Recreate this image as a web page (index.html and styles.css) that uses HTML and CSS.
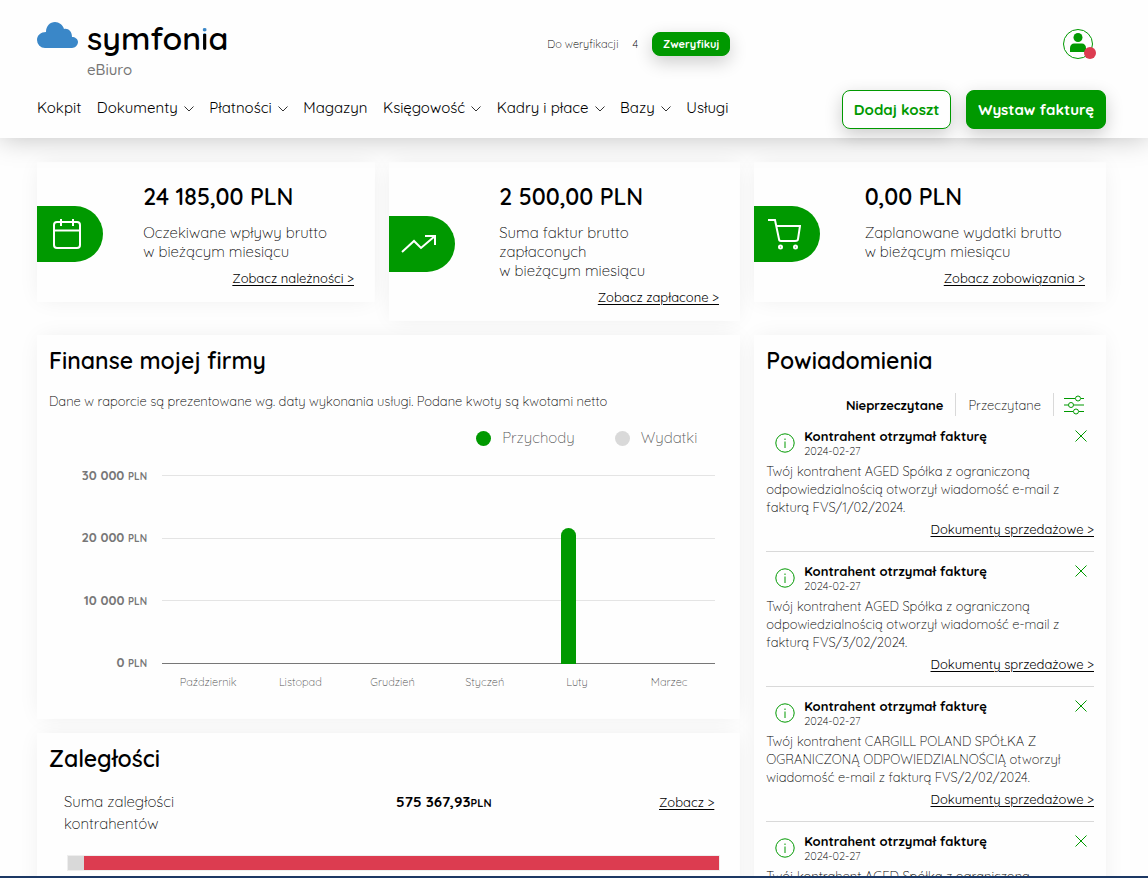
FILE: index.html
```
<!DOCTYPE html>
<html lang="pl">
<head>
    <meta charset="utf-8">
    <meta name="viewport" content="width=device-width, initial-scale=1.0">
    <title>Symfonia eBiuro</title>
    <link rel="stylesheet" href="styles.css">
</head>
<body>
<header class="header">
    <div class="header_main">
        <div class="header_top">
            <a class="logo" href="#">
                <svg class="logo_cloud" width="41" height="26" viewBox="0 0 41 26"><path d="M8 26a8 8 0 0 1-8-8c0-5 4-8 9-8C9 4 13 0 18 0c4 0 8 3 9 7 4-1 8 2 8 8 3 0 6 2 6 5s-3 6-6 6z" fill="#3a87c8"/></svg>
                <span class="logo_text">
                    <span class="logo_name">symfon<span class="logo_i">i</span>a</span>
                    <span class="logo_sub">eBiuro</span>
                </span>
            </a>
            <div class="verify">
                <span>Do weryfikacji</span>
                <span>4</span>
                <button type="button" class="btn btn_small">Zweryfikuj</button>
            </div>
        </div>
        <nav class="nav">
            <a href="#">Kokpit</a>
            <a href="#">Dokumenty<svg class="chevron" viewBox="0 0 10 6"><path d="M.5.5 5 5 9.500.5"/></svg></a>
            <a href="#">Płatności<svg class="chevron" viewBox="0 0 10 6"><path d="M.5.5 5 5 9.500.5"/></svg></a>
            <a href="#">Magazyn</a>
            <a href="#">Księgowość<svg class="chevron" viewBox="0 0 10 6"><path d="M.5.5 5 5 9.500.5"/></svg></a>
            <a href="#">Kadry i płace<svg class="chevron" viewBox="0 0 10 6"><path d="M.5.5 5 5 9.500.5"/></svg></a>
            <a href="#">Bazy<svg class="chevron" viewBox="0 0 10 6"><path d="M.5.5 5 5 9.500.5"/></svg></a>
            <a href="#">Usługi</a>
        </nav>
    </div>
    <div class="header_side">
        <button type="button" class="avatar" aria-label="Konto">
            <svg width="34" height="32" viewBox="0 0 34 32">
                <circle cx="15" cy="15" r="14.500" fill="none" stroke="#090"/>
                <circle cx="15" cy="8.500" r="4.500" fill="#090"/>
                <path d="M7 23v-4c0-3 2-4.500 4-4.500h8c2 0 4 1.500 4 4.500v4z" fill="#090"/>
                <circle cx="27" cy="24" r="6" fill="#dc3c50"/>
            </svg>
        </button>
        <div class="actions">
            <button type="button" class="btn btn_outline">Dodaj koszt</button>
            <button type="button" class="btn">Wystaw fakturę</button>
        </div>
    </div>
</header>

<main class="content">
    <section class="stats">
        <article class="card stat">
            <div class="stat_icon">
                <svg width="28" height="30" viewBox="0 0 28 30"><rect x="1" y="3" width="26" height="26" rx="3"/><path d="M1 11.500h26M8 0v7M20 0v7"/></svg>
            </div>
            <div class="stat_body">
                <div class="stat_value">24 185,00 PLN</div>
                <p class="stat_text">Oczekiwane wpływy brutto<br>w bieżącym miesiącu</p>
                <a class="link" href="#">Zobacz należności &gt;</a>
            </div>
        </article>
        <article class="card stat">
            <div class="stat_icon">
                <svg width="36" height="20" viewBox="0 0 36 20"><path d="m1 18 12-11 7 7L34 2M24 2h10v9"/></svg>
            </div>
            <div class="stat_body">
                <div class="stat_value">2 500,00 PLN</div>
                <p class="stat_text">Suma faktur brutto<br>zapłaconych<br>w bieżącym miesiącu</p>
                <a class="link" href="#">Zobacz zapłacone &gt;</a>
            </div>
        </article>
        <article class="card stat">
            <div class="stat_icon">
                <svg width="33" height="32" viewBox="0 0 33 32"><path d="M0 2h7l4 19c0 1 1 2 2 2h14c2 0 3-1 3-2l2-13H8"/><circle cx="12.500" cy="29" r="1.500"/><circle cx="27.500" cy="29" r="1.500"/></svg>
            </div>
            <div class="stat_body">
                <div class="stat_value">0,00 PLN</div>
                <p class="stat_text">Zaplanowane wydatki brutto<br>w bieżącym miesiącu</p>
                <a class="link" href="#">Zobacz zobowiązania &gt;</a>
            </div>
        </article>
    </section>

    <div class="columns">
        <div class="column">
            <section class="card finance">
                <h2>Finanse mojej firmy</h2>
                <p class="finance_note">Dane w raporcie są prezentowane wg. daty wykonania usługi. Podane kwoty są kwotami netto</p>
                <div class="legend">
                    <span class="legend_item">Przychody</span>
                    <span class="legend_item is_expense">Wydatki</span>
                </div>
                <div class="chart">
                    <div class="chart_labels">
                        <span>30 000 <small>PLN</small></span>
                        <span>20 000 <small>PLN</small></span>
                        <span>10 000 <small>PLN</small></span>
                        <span>0 <small>PLN</small></span>
                    </div>
                    <div class="chart_lines"><i></i><i></i><i></i></div>
                    <div class="chart_bars">
                        <div></div>
                        <div></div>
                        <div></div>
                        <div></div>
                        <div><span class="bar" style="height: 72%"></span></div>
                        <div></div>
                    </div>
                    <div class="chart_months">
                        <span>Październik</span>
                        <span>Listopad</span>
                        <span>Grudzień</span>
                        <span>Styczeń</span>
                        <span>Luty</span>
                        <span>Marzec</span>
                    </div>
                </div>
            </section>

            <section class="card">
                <h2>Zaległości</h2>
                <div class="arrears">
                    <span class="arrears_name">Suma zaległości<br>kontrahentów</span>
                    <span class="arrears_value">575 367,93<small>PLN</small></span>
                    <a class="link" href="#">Zobacz &gt;</a>
                </div>
                <div class="progress"><i style="width: 97.6%"></i></div>
            </section>
        </div>

        <section class="card notifications">
            <h2>Powiadomienia</h2>
            <div class="tabs">
                <button type="button" class="tab is_active">Nieprzeczytane</button>
                <button type="button" class="tab">Przeczytane</button>
                <button type="button" class="tab tab_filter" aria-label="Filtry">
                    <svg width="20" height="20" viewBox="0 0 20 20" fill="none" stroke="#090"><path d="M0 3.500h11M17 3.500h3M0 10h4M10 10h10M0 16.500h9M15 16.500h5"/><circle cx="14" cy="3.500" r="2.500"/><circle cx="7" cy="10" r="2.500"/><circle cx="12" cy="16.500" r="2.500"/></svg>
                </button>
            </div>
            <article class="notice">
                <div class="notice_head">
                    <svg class="notice_icon" viewBox="0 0 20 20"><circle cx="10" cy="10" r="9.200"/><path d="M10 8.500V15M10 5.500V7"/></svg>
                    <div>
                        <h3>Kontrahent otrzymał fakturę</h3>
                        <time>2024-02-27</time>
                    </div>
                    <button type="button" class="close" aria-label="Zamknij"><svg viewBox="0 0 12 12"><path d="m.5.5 11 11M11.500.5l-11 11"/></svg></button>
                </div>
                <p>Twój kontrahent AGED Spółka z ograniczoną<br>odpowiedzialnością otworzył wiadomość e-mail z<br>fakturą FVS/1/02/2024.</p>
                <a class="link" href="#">Dokumenty sprzedażowe &gt;</a>
            </article>
            <article class="notice">
                <div class="notice_head">
                    <svg class="notice_icon" viewBox="0 0 20 20"><circle cx="10" cy="10" r="9.200"/><path d="M10 8.500V15M10 5.500V7"/></svg>
                    <div>
                        <h3>Kontrahent otrzymał fakturę</h3>
                        <time>2024-02-27</time>
                    </div>
                    <button type="button" class="close" aria-label="Zamknij"><svg viewBox="0 0 12 12"><path d="m.5.5 11 11M11.500.5l-11 11"/></svg></button>
                </div>
                <p>Twój kontrahent AGED Spółka z ograniczoną<br>odpowiedzialnością otworzył wiadomość e-mail z<br>fakturą FVS/3/02/2024.</p>
                <a class="link" href="#">Dokumenty sprzedażowe &gt;</a>
            </article>
            <article class="notice">
                <div class="notice_head">
                    <svg class="notice_icon" viewBox="0 0 20 20"><circle cx="10" cy="10" r="9.200"/><path d="M10 8.500V15M10 5.500V7"/></svg>
                    <div>
                        <h3>Kontrahent otrzymał fakturę</h3>
                        <time>2024-02-27</time>
                    </div>
                    <button type="button" class="close" aria-label="Zamknij"><svg viewBox="0 0 12 12"><path d="m.5.5 11 11M11.500.5l-11 11"/></svg></button>
                </div>
                <p>Twój kontrahent CARGILL POLAND SPÓŁKA Z<br>OGRANICZONĄ ODPOWIEDZIALNOŚCIĄ otworzył<br>wiadomość e-mail z fakturą FVS/2/02/2024.</p>
                <a class="link" href="#">Dokumenty sprzedażowe &gt;</a>
            </article>
            <article class="notice">
                <div class="notice_head">
                    <svg class="notice_icon" viewBox="0 0 20 20"><circle cx="10" cy="10" r="9.200"/><path d="M10 8.500V15M10 5.500V7"/></svg>
                    <div>
                        <h3>Kontrahent otrzymał fakturę</h3>
                        <time>2024-02-27</time>
                    </div>
                    <button type="button" class="close" aria-label="Zamknij"><svg viewBox="0 0 12 12"><path d="m.5.5 11 11M11.500.5l-11 11"/></svg></button>
                </div>
                <p>Twój kontrahent AGED Spółka z ograniczoną</p>
            </article>
        </section>
    </div>
</main>
<footer class="bottom_bar"></footer>
</body>
</html>
```
FILE: styles.css
```
* {
    box-sizing: border-box;
}

body {
    display: flex;
    flex-direction: column;
    height: 100vh;
    margin: 0;
    overflow: hidden;
    background: #fefefe;
    color: #000;
    font-family: Quicksand, Lato, sans-serif;
    font-size: 13px;
    font-weight: 300;
    line-height: 18px;
}

h2, h3, p {
    margin: 0;
}

h2 {
    color: #000;
    font-size: 23px;
    font-weight: 600;
    line-height: 31px;
}

a {
    color: #000;
    text-decoration: none;
}

button {
    padding: 0;
    border: 0;
    background: none;
    font-family: inherit;
}

svg {
    display: block;
    flex: none;
}

/* header */
.header {
    position: relative;
    flex: none;
    display: grid;
    grid-template-columns: 24fr 13fr;
    padding: 22px 42px 9px 37px;
    background: #fefefe;
    box-shadow: 0 0 26px rgba(0, 0, 0, 0.25);
}

.header_main, .header_side {
    display: flex;
    flex-direction: column;
    justify-content: space-between;
}

.header_top {
    display: flex;
    justify-content: space-between;
    align-items: flex-start;
}

.logo {
    display: flex;
    gap: 9px;
}

.logo_text {
    display: flex;
    flex-direction: column;
}

.logo_name {
    font-size: 32px;
    font-weight: 600;
    line-height: 32px;
}

.logo_i {
    background: linear-gradient(#3a87c8 40%, #000 40%);
    -webkit-background-clip: text;
    background-clip: text;
    color: transparent;
}

.logo_sub {
    color: #777;
    font-size: 15px;
    font-weight: 500;
    line-height: 32px;
}

.verify {
    display: flex;
    align-items: center;
    gap: 14px;
    padding-top: 10px;
    font-size: 11px;
}

.btn {
    height: 39px;
    padding: 0 11px;
    border: 1px solid #090;
    border-radius: 8px;
    background: #090;
    box-shadow: 0 6px 18px rgba(0, 0, 0, 0.2);
    color: #fff;
    font-size: 15px;
    font-weight: 700;
}

.btn_outline {
    background: #fefefe;
    color: #090;
}

.btn_small {
    height: 24px;
    padding: 0 10px;
    font-size: 11px;
}

.nav {
    display: flex;
    justify-content: space-between;
    margin-top: 11px;
    padding: 0 2px 10px 0;
    font-size: 15px;
    font-weight: 400;
    line-height: 22px;
}

.nav a {
    display: flex;
    align-items: center;
    gap: 6px;
}

.chevron {
    width: 10px;
    height: 6px;
    margin-top: 2px;
    fill: none;
    stroke: #333;
}

.header_side {
    align-items: flex-end;
}

.avatar {
    margin: 7px 9px 0 0;
}

.actions {
    display: flex;
    gap: 15px;
}

/* cards */
.content {
    flex: 1;
    min-height: 0;
    padding: 24px 42px 0 37px;
    overflow: hidden;
}

.card {
    padding: 10px 12px;
    background: #fefefe;
    box-shadow: 0 0 22px -4px rgba(0, 0, 0, 0.08);
}

.link {
    align-self: flex-end;
    color: #000;
    font-weight: 400;
    text-decoration: underline;
    text-underline-offset: 2px;
}

.stats {
    display: grid;
    grid-template-columns: 338fr 351fr 352fr;
    align-items: start;
    gap: 14px;
    margin-bottom: 14px;
}

.stat {
    display: grid;
    grid-template-columns: 11fr 24fr;
    align-items: center;
    padding: 19px 0 15px;
}

.stat_icon {
    display: flex;
    align-items: center;
    justify-content: center;
    width: 66px;
    height: 56px;
    padding-right: 6px;
    border-radius: 0 28px 28px 0;
    background: #090;
}

.stat_icon svg {
    fill: none;
    stroke: #fff;
    stroke-width: 2;
}

.stat_body {
    display: flex;
    flex-direction: column;
    padding-right: 21px;
}

.stat_value {
    color: #000;
    font-size: 23px;
    font-weight: 600;
    line-height: 31px;
}

.stat_text {
    margin: 11px 0 8px;
    font-size: 15px;
    line-height: 19px;
}

.columns {
    display: grid;
    grid-template-columns: 2fr 1fr;
    align-items: start;
    gap: 14px;
}

.column {
    display: flex;
    flex-direction: column;
    gap: 14px;
}

/* finance chart */
.finance {
    padding-bottom: 28px;
}

.finance_note {
    margin: 16px 0 18px;
}

.legend {
    display: flex;
    justify-content: flex-end;
    gap: 40px;
    padding-right: 31px;
    color: #555;
    font-size: 15px;
    line-height: 20px;
}

.legend_item {
    display: flex;
    align-items: center;
    gap: 11px;
}

.legend_item::before {
    content: "";
    width: 15px;
    height: 15px;
    border-radius: 50%;
    background: #090;
}

.legend_item.is_expense::before {
    background: #d9d9d9;
}

.chart {
    display: grid;
    grid-template-columns: 98px 1fr;
    grid-template-rows: 189px auto;
    column-gap: 15px;
    padding: 27px 13px 0 0;
}

.chart_labels {
    display: flex;
    flex-direction: column;
    justify-content: space-between;
    margin: -9px 0;
    color: #777;
    font-size: 13px;
    font-weight: 700;
    text-align: right;
}

.chart_labels small {
    font-size: 10px;
}

.chart_lines, .chart_bars {
    grid-area: 1 / 2;
}

.chart_lines {
    display: flex;
    flex-direction: column;
    border-bottom: 1px solid #777;
}

.chart_lines i {
    flex: 1;
    border-top: 1px solid #e4e4e4;
}

.chart_bars, .chart_months {
    display: grid;
    grid-template-columns: repeat(6, 1fr);
}

.chart_bars div {
    display: flex;
    align-items: flex-end;
}

.bar {
    width: 15px;
    margin-left: calc(50% - 16px);
    border-radius: 8px 8px 0 0;
    background: #090;
}

.chart_months {
    grid-column: 2;
    padding-top: 9px;
    color: #555;
    font-size: 11px;
    text-align: center;
}

/* arrears */
.arrears {
    display: grid;
    grid-template-columns: 332px 1fr auto;
    padding: 17px 14px 20px 15px;
    line-height: 22px;
}

.arrears .link {
    align-self: start;
}

.arrears_name {
    font-size: 15px;
}

.arrears_value {
    color: #000;
    font-size: 15px;
    font-weight: 700;
}

.arrears_value small {
    font-size: 11px;
}

.progress {
    display: flex;
    justify-content: flex-end;
    height: 16px;
    margin: 0 8px 20px 18px;
    border: 1px solid #eee;
    background: #d9d9d9;
}

.progress i {
    background: #dc3c50;
}

/* notifications */
.tabs {
    display: flex;
    justify-content: flex-end;
    height: 23px;
    margin: 17px 0 1px;
}

.tab {
    padding: 0 12px;
    color: #000;
    font-size: 13px;
    font-weight: 300;
}

.tab + .tab {
    border-left: 1px solid #d9d9d9;
}

.tab.is_active {
    font-weight: 700;
}

.tab_filter {
    padding: 0 10px;
}

.notice {
    display: flex;
    flex-direction: column;
    padding: 10px 0 13px;
    border-bottom: 1px solid #d9d9d9;
}

.notice_head {
    display: grid;
    grid-template-columns: 29px 1fr 12px;
    align-items: start;
    padding: 0 7px 4px 9px;
}

.notice_icon {
    width: 20px;
    height: 20px;
    margin-top: 6px;
    fill: none;
    stroke: #090;
}

.notice h3 {
    color: #000;
    font-size: 13px;
    font-weight: 700;
    line-height: 18px;
}

.notice time {
    display: block;
    font-size: 11px;
    line-height: 13px;
}

.notice .link {
    margin-top: 4px;
}

.close {
    padding-top: 3px;
}

.close svg {
    width: 12px;
    height: 12px;
    fill: none;
    stroke: #090;
}

.bottom_bar {
    position: relative;
    flex: none;
    height: 2px;
    background: #1c3864;
}
```
